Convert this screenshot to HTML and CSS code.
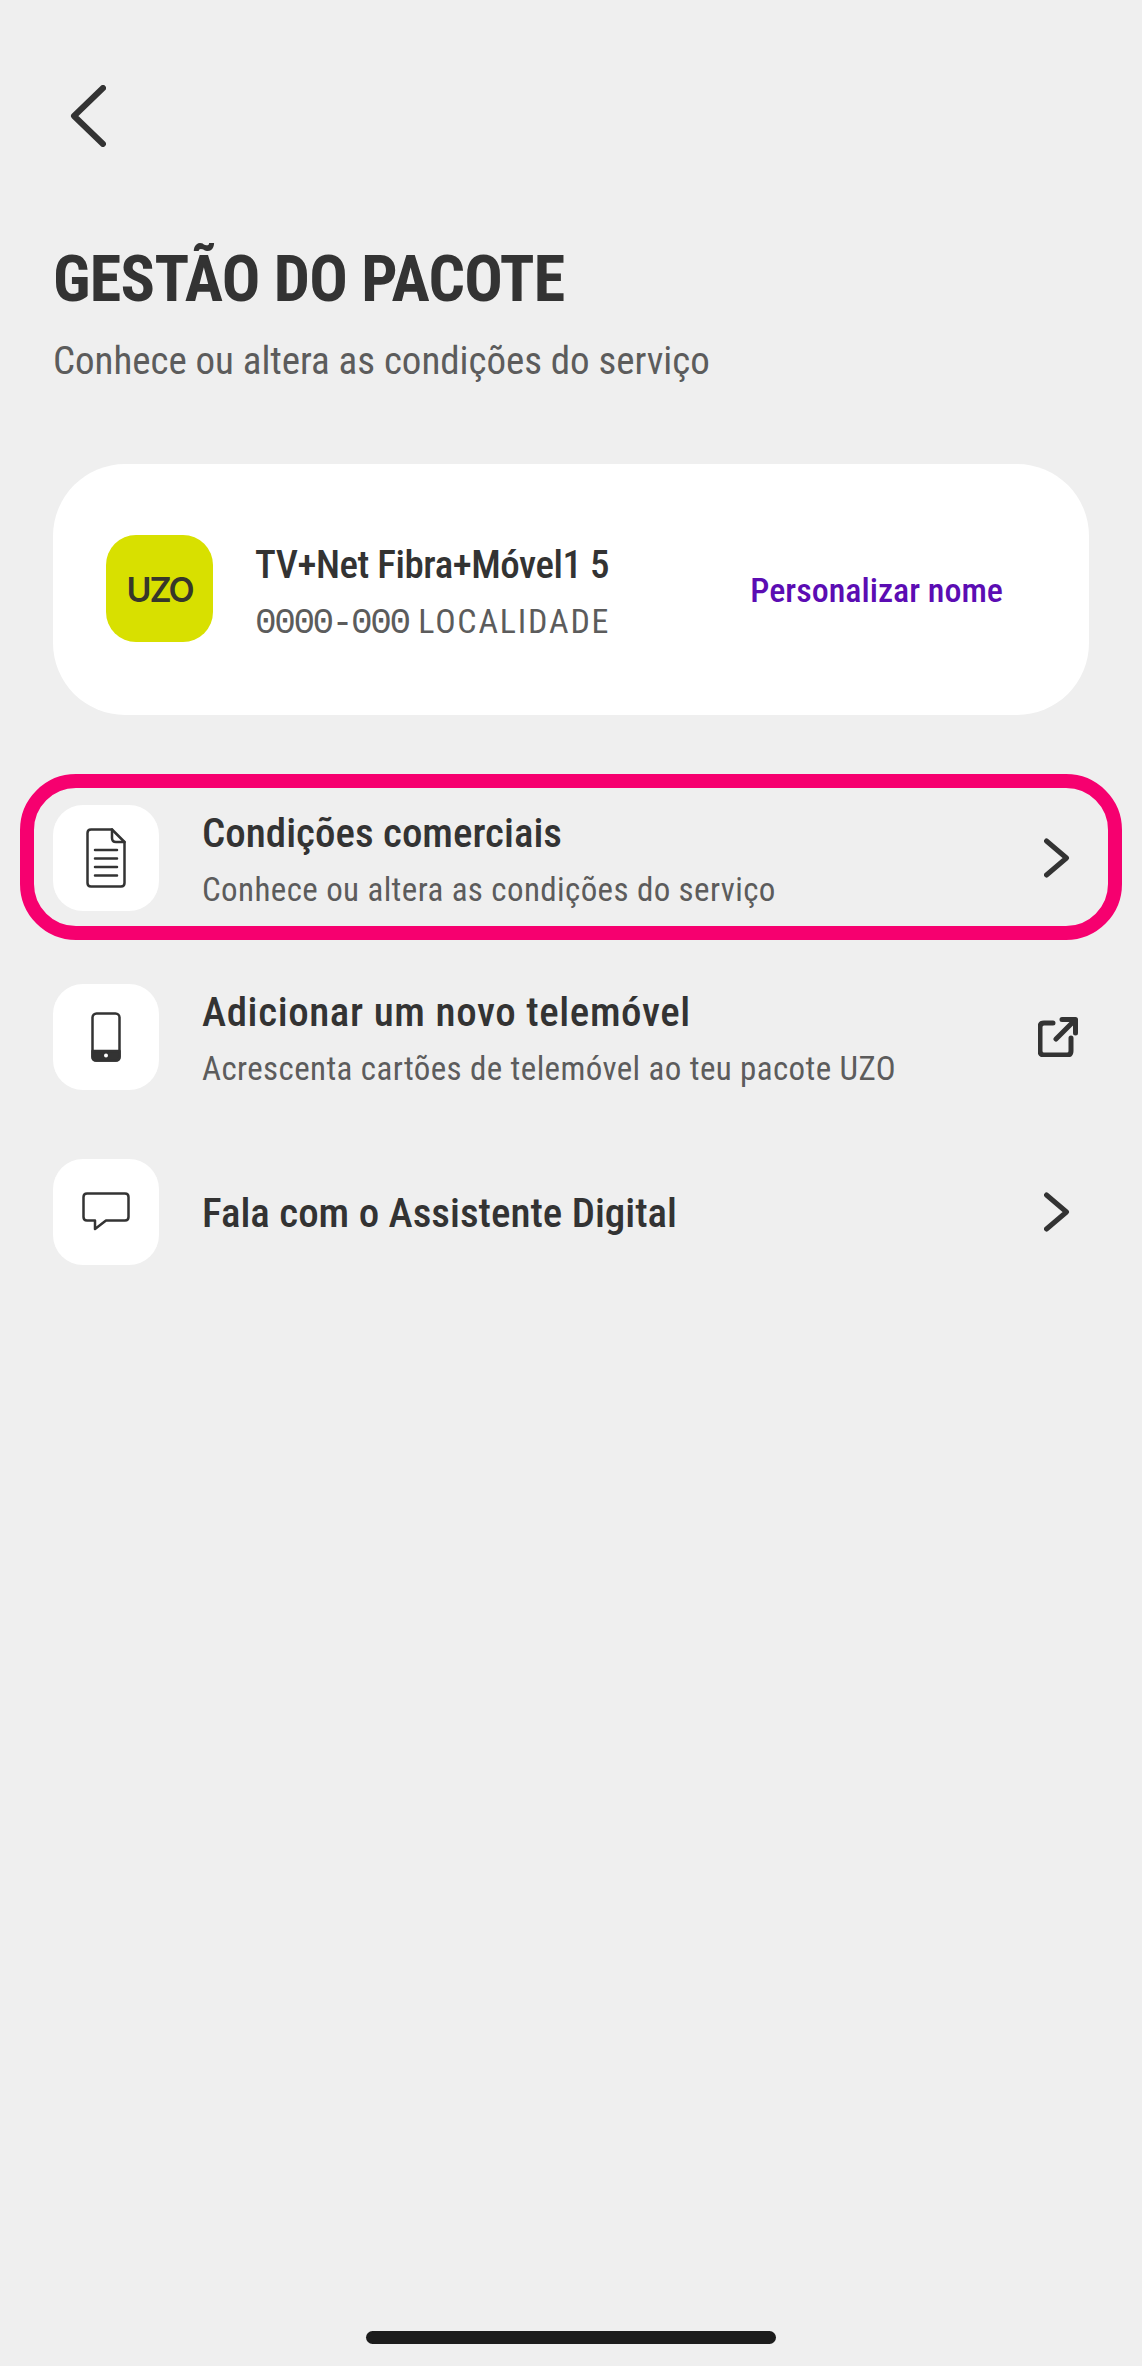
FILE: index.html
```html
<!DOCTYPE html>
<html lang="pt">
<head>
    <meta charset="UTF-8">
    <meta name="viewport" content="width=device-width, initial-scale=1.0">
    <title>Gestão do pacote</title>
    <link rel="stylesheet" href="styles.css">
</head>
<body>
    <div class="page">
        <button class="back-button" type="button" aria-label="Voltar">
            <svg width="36" height="62" viewBox="0 0 36 62"><path d="M33 3 L4 31 L33 59" class="line-icon"/></svg>
        </button>

        <h1 class="page-title">GESTÃO DO PACOTE</h1>
        <p class="page-subtitle">Conhece ou altera as condições do serviço</p>

        <div class="package-card">
            <div class="uzo-logo"><span>UZO</span></div>
            <div class="package-info">
                <div class="package-name">TV+Net Fibra+Móvel1 5</div>
                <div class="package-place"><span class="postal-code">0000-000</span> LOCALIDADE</div>
            </div>
            <a class="rename-link" href="#">Personalizar nome</a>
        </div>

        <div class="menu-row menu-row-highlight">
            <div class="icon-tile">
                <svg width="40" height="60" viewBox="0 0 40 60" class="thin-icon">
                    <path d="M5 1.5 H26 L38.5 14 V55 Q38.5 58.5 35 58.5 H5 Q1.5 58.5 1.5 55 V5 Q1.5 1.5 5 1.5 Z"/>
                    <path d="M26 1.5 V10 Q26 14 30 14 H38.5"/>
                    <path d="M9 22 H31 M9 30.5 H31 M9 39 H31 M9 47.5 H31"/>
                </svg>
            </div>
            <div class="menu-text">
                <div class="menu-title">Condições comerciais</div>
                <div class="menu-subtitle">Conhece ou altera as condições do serviço</div>
            </div>
            <svg class="row-icon" width="26" height="40" viewBox="0 0 26 40"><path d="M2.5 3 L22.5 20 L2.5 37" class="row-line"/></svg>
        </div>

        <div class="menu-row menu-row-phone">
            <div class="icon-tile">
                <svg width="30" height="50" viewBox="0 0 30 50" class="thin-icon">
                    <rect x="1.5" y="1.5" width="27" height="47" rx="4"/>
                    <path class="phone-base" d="M1.5 39 H28.5 V45 Q28.5 48.5 25 48.5 H5 Q1.5 48.5 1.5 45 Z"/>
                    <circle class="phone-dot" cx="15" cy="43.5" r="2"/>
                </svg>
            </div>
            <div class="menu-text">
                <div class="menu-title">Adicionar um novo telemóvel</div>
                <div class="menu-subtitle">Acrescenta cartões de telemóvel ao teu pacote UZO</div>
            </div>
            <svg class="row-icon row-icon-external" width="40" height="40" viewBox="0 0 40 40">
                <path d="M15 6 H6 Q2 6 2 10 V34 Q2 38 6 38 H29 Q33 38 33 34 V21" class="row-line"/>
                <path d="M18 22 L37 3 M24 2.5 H37.5 V16" class="row-line"/>
            </svg>
        </div>

        <div class="menu-row menu-row-chat">
            <div class="icon-tile">
                <svg width="48" height="40" viewBox="0 0 48 40" class="thin-icon">
                    <path d="M5 1.5 H43 Q46.5 1.5 46.5 5 V25 Q46.5 28.5 43 28.5 H24 L13 37 V28.5 H5 Q1.5 28.5 1.5 25 V5 Q1.5 1.5 5 1.5 Z"/>
                </svg>
            </div>
            <div class="menu-text">
                <div class="menu-title">Fala com o Assistente Digital</div>
            </div>
            <svg class="row-icon" width="26" height="40" viewBox="0 0 26 40"><path d="M2.5 3 L22.5 20 L2.5 37" class="row-line"/></svg>
        </div>

        <div class="home-bar"></div>
    </div>
</body>
</html>
```

FILE: styles.css
```css
* {
    box-sizing: border-box;
}

body {
    margin: 0;
    background-color: #efefef;
    font-family: "Roboto", sans-serif;
    font-stretch: 75%;
    color: #333333;
}

.page {
    position: relative;
    height: 2366px;
    padding: 85px 53px 0;
    display: flex;
    flex-direction: column;
}

.back-button {
    align-self: flex-start;
    margin-left: 17px;
    padding: 0;
    height: 64px;
    background: none;
    border: none;
}

.line-icon {
    fill: none;
    stroke: #333333;
    stroke-width: 6;
    stroke-linecap: round;
    stroke-linejoin: round;
}

.page-title {
    margin: 94px 0 0;
    font-size: 64px;
    line-height: 74px;
    font-weight: 700;
    letter-spacing: -0.65px;
}

.page-subtitle {
    margin: 21px 0 0;
    font-size: 39px;
    line-height: 46px;
    font-weight: 400;
    letter-spacing: -0.05px;
    color: #5c5c5c;
}

.package-card {
    margin-top: 80px;
    height: 251px;
    padding: 0 86px 0 53px;
    background-color: #ffffff;
    border-radius: 72px;
    display: flex;
    align-items: center;
}

.uzo-logo {
    width: 107px;
    height: 107px;
    margin-bottom: 3px;
    padding-top: 2px;
    border-radius: 30px;
    background-color: #d8e000;
    display: flex;
    align-items: center;
    justify-content: center;
    font-family: "Inter", sans-serif;
    font-stretch: normal;
    font-size: 34px;
    font-weight: 600;
    letter-spacing: -2px;
    color: #37372a;
}

.package-info {
    margin: 6px 0 0 42px;
    flex: 1;
}

.package-name {
    font-size: 39px;
    line-height: 46px;
    font-weight: 500;
    letter-spacing: -0.45px;
}

.package-place {
    margin-top: 14px;
    font-size: 34px;
    line-height: 38px;
    letter-spacing: 1.8px;
    color: #5c5c5c;
}

.postal-code {
    font-family: "Liberation Mono", monospace;
    font-size: 36px;
    letter-spacing: -2.4px;
}

.rename-link {
    font-size: 34px;
    font-weight: 500;
    color: #5b0cb3;
    text-decoration: none;
}

.menu-row {
    display: flex;
    align-items: center;
}

.menu-row-highlight {
    margin: 59px -33px 0;
    height: 166px;
    padding: 16px 19px 15px;
    border: 14px solid #f6006f;
    border-radius: 56px;
}

.menu-row-phone {
    margin-top: 44px;
}

.menu-row-chat {
    margin-top: 69px;
}

.icon-tile {
    flex: none;
    width: 106px;
    height: 106px;
    border-radius: 30px;
    background-color: #ffffff;
    display: flex;
    align-items: center;
    justify-content: center;
}

.thin-icon {
    fill: none;
    stroke: #333333;
    stroke-width: 2.5;
    stroke-linecap: round;
    stroke-linejoin: round;
}

.thin-icon .phone-base {
    fill: #333333;
}

.thin-icon .phone-dot {
    fill: #ffffff;
    stroke: none;
}

.menu-text {
    margin-left: 43px;
    padding-top: 2px;
    flex: 1;
}

.menu-title {
    font-size: 41px;
    line-height: 48px;
    font-weight: 500;
}

.menu-row-phone .menu-title {
    letter-spacing: 0.6px;
}

.menu-subtitle {
    margin-top: 14px;
    font-size: 33px;
    line-height: 38px;
    font-weight: 400;
    letter-spacing: 0.4px;
    color: #5c5c5c;
}

.row-icon {
    flex: none;
    margin-right: 19px;
}

.row-icon-external {
    margin-right: 11px;
}

.row-line {
    fill: none;
    stroke: #333333;
    stroke-width: 5;
    stroke-linecap: round;
    stroke-linejoin: round;
}

.home-bar {
    position: absolute;
    left: 366px;
    top: 2331px;
    width: 410px;
    height: 13px;
    border-radius: 7px;
    background-color: #1c1c1c;
}
```
